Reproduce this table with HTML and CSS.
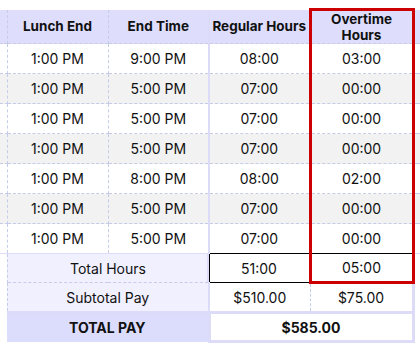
FILE: index.html
```html
<!DOCTYPE html>
<html lang="en">
<head>
<meta charset="utf-8">
<title>Timesheet</title>
<link rel="stylesheet" href="styles.css">
</head>
<body>
<div class="scroller">
  <table class="sheet">
    <colgroup>
      <col class="c-edge">
      <col class="c-time">
      <col class="c-time">
      <col class="c-hours">
      <col class="c-ot">
      <col class="c-edge-r">
    </colgroup>
    <thead>
      <tr>
        <th class="edge"></th>
        <th>Lunch End</th>
        <th class="group-end">End Time</th>
        <th>Regular Hours</th>
        <th class="ot ot-top">Overtime Hours</th>
        <th class="edge-r"></th>
      </tr>
    </thead>
    <tbody>
      <tr><td class="edge"></td><td>1:00 PM</td><td class="group-end">9:00 PM</td><td>08:00</td><td class="ot">03:00</td><td class="edge-r"></td></tr>
      <tr><td class="edge"></td><td>1:00 PM</td><td class="group-end">5:00 PM</td><td>07:00</td><td class="ot">00:00</td><td class="edge-r"></td></tr>
      <tr><td class="edge"></td><td>1:00 PM</td><td class="group-end">5:00 PM</td><td>07:00</td><td class="ot">00:00</td><td class="edge-r"></td></tr>
      <tr><td class="edge"></td><td>1:00 PM</td><td class="group-end">5:00 PM</td><td>07:00</td><td class="ot">00:00</td><td class="edge-r"></td></tr>
      <tr><td class="edge"></td><td>1:00 PM</td><td class="group-end">8:00 PM</td><td>08:00</td><td class="ot">02:00</td><td class="edge-r"></td></tr>
      <tr><td class="edge"></td><td>1:00 PM</td><td class="group-end">5:00 PM</td><td>07:00</td><td class="ot">00:00</td><td class="edge-r"></td></tr>
      <tr class="last"><td class="edge"></td><td>1:00 PM</td><td class="group-end">5:00 PM</td><td class="open-bottom">07:00</td><td class="ot open-bottom">00:00</td><td class="edge-r"></td></tr>
    </tbody>
    <tfoot>
      <tr class="f-hours">
        <td class="edge f-edge"></td>
        <td class="f-label f-label-open" colspan="2">Total Hours</td>
        <td class="f-boxed">51:00</td>
        <td class="f-boxed ot ot-bottom">05:00</td>
        <td class="f-blank"></td>
      </tr>
      <tr class="f-sub">
        <td class="edge f-edge"></td>
        <td class="f-label" colspan="2">Subtotal Pay</td>
        <td class="f-val f-val-mid">$510.00</td>
        <td class="f-val f-val-end">$75.00</td>
        <td class="f-blank"></td>
      </tr>
      <tr class="f-total">
        <td class="f-blank"></td>
        <td class="f-total-label" colspan="2">TOTAL PAY</td>
        <td class="f-total-val" colspan="2">$585.00</td>
        <td class="f-blank"></td>
      </tr>
    </tfoot>
  </table>
</div>
</body>
</html>
```

FILE: styles.css
```css
html, body {
  margin: 0;
  padding: 0;
  background: #ffffff;
}

.scroller {
  padding-top: 8px;
  overflow: hidden;
  width: 420px;
}

.sheet {
  border-collapse: collapse;
  table-layout: fixed;
  width: 421px;
  font-family: Inter, "Liberation Sans", sans-serif;
  font-size: 14px;
  line-height: 17px;
  color: #111111;
}

.c-edge { width: 7px; }
.c-time { width: 101px; }
.c-hours { width: 101px; }
.c-ot { width: 103px; }
.c-edge-r { width: 8px; }

.sheet th,
.sheet td {
  padding: 0;
  text-align: center;
  vertical-align: middle;
  white-space: nowrap;
}

.sheet th {
  height: 32px;
  background: #dedefc;
  font-weight: 700;
  font-size: 13.5px;
  line-height: 16px;
  border-left: 1px dashed #c6cbe8;
  border-right: 1px dashed #c6cbe8;
}

.sheet th.ot {
  white-space: normal;
  padding: 0 18px;
}

.sheet tbody td {
  height: 29px;
  border: 1px dashed #c6cbe8;
  background: #ffffff;
}

.sheet tbody tr:nth-child(even) td {
  background: #f2f2f2;
}

.sheet tbody tr.last td {
  border-bottom: 1px solid #dcdcf8;
}

.sheet tbody tr.last td.open-bottom {
  border-bottom: none;
}

.sheet td.edge,
.sheet th.edge {
  border-left: none;
}

.sheet td.edge-r,
.sheet th.edge-r {
  border-right: none;
  border-left: none;
}

.sheet .group-end {
  border-right: 2px solid #dcdcf8;
}

.sheet .ot {
  border-left: 3px solid #cc0000;
  border-right: 3px solid #cc0000;
}

.sheet .ot-top {
  border-top: 3px solid #cc0000;
}

.sheet .ot-bottom {
  border-bottom: 3px solid #cc0000;
}

/* footer */
.sheet .f-hours td {
  height: 27px;
}

.sheet .f-sub td {
  height: 27px;
}

.sheet .f-total td {
  height: 26px;
}

.sheet td.f-edge {
  border-right: 1px dashed #c6cbe8;
  background: #ffffff;
}

.sheet td.f-label {
  background: #f0f0fe;
  border-right: 2px solid #dcdcf8;
}

.sheet td.f-label-open {
  border-right: none;
  box-shadow: inset -2px 0 0 #dcdcf8;
}

.f-hours td.f-label {
  border-bottom: 1px dashed #c6cbe8;
}

.sheet td.f-boxed {
  border-top: 1px solid #000000;
  border-bottom: 1px solid #000000;
  border-left: 1px solid #000000;
  background: #ffffff;
}

.sheet td.f-boxed.ot {
  border-top: 1px solid #000000;
  border-left: 3px solid #cc0000;
  border-right: 3px solid #cc0000;
  border-bottom: 3px solid #cc0000;
}

.sheet td.f-val {
  background: #ffffff;
}

.sheet td.f-val-mid {
  border-right: 1px dashed #c6cbe8;
}

.sheet td.f-val-end {
  border-right: 3px solid #dcdcf8;
}

.f-sub td.f-val,
.f-sub td.f-label {
  border-bottom: 3px solid #dcdcf8;
}

.sheet td.f-blank {
  background: #ffffff;
}

.sheet td.f-total-label {
  background: #dcdcfc;
  font-weight: 700;
}

.sheet td.f-total-val {
  background: #ffffff;
  font-weight: 700;
  border: 3px solid #dcdcf8;
}
```
